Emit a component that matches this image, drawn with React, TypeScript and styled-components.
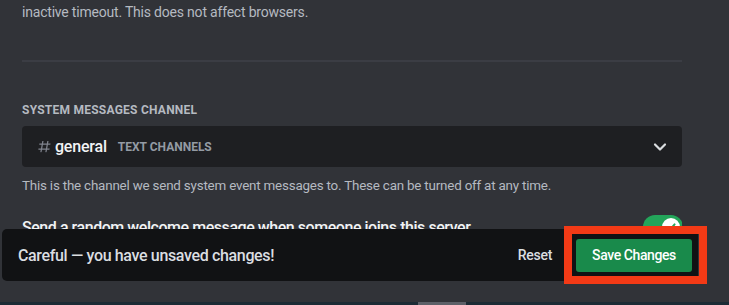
import React from "react";
import styled, { createGlobalStyle } from "styled-components";

const Global = createGlobalStyle`
  html, body { margin: 0; padding: 0; background: #313338; }
  body { font-family: Roboto, "Noto Sans", sans-serif; -webkit-font-smoothing: antialiased; }
`;

const Page = styled.div`
  position: relative;
  width: 729px;
  height: 305px;
  overflow: hidden;
  background: #313338;
  display: flex;
  flex-direction: column;
`;

const Content = styled.div`
  flex: 1;
  overflow: hidden;
  padding: 2px 0 0 22px;
  width: 660px;
  display: flex;
  flex-direction: column;
`;

const Description = styled.div<{ $mt?: number; $size?: number }>`
  margin-top: ${(p) => p.$mt ?? 0}px;
  font-size: ${(p) => p.$size ?? 14}px;
  line-height: 20px;
  letter-spacing: -0.2px;
  color: #b5bac1;
  white-space: nowrap;
`;

const Divider = styled.div`
  margin-top: 38px;
  height: 2px;
  background: #3b3d44;
`;

const Label = styled.div`
  margin-top: 40px;
  font-size: 12px;
  line-height: 16px;
  font-weight: 700;
  letter-spacing: 0.02em;
  text-transform: uppercase;
  color: #b5bac1;
`;

const Select = styled.div`
  margin-top: 8px;
  height: 41px;
  box-sizing: border-box;
  background: #1e1f22;
  border-radius: 4px;
  display: flex;
  align-items: center;
  padding: 0 15px;
`;

const ChannelName = styled.span`
  margin-left: 3px;
  font-size: 16px;
  font-weight: 500;
  letter-spacing: -0.2px;
  color: #f2f3f5;
`;

const Category = styled.span`
  margin-left: 11px;
  font-size: 12px;
  font-weight: 700;
  color: #949ba4;
  text-transform: uppercase;
`;

const Spacer = styled.div`
  flex: 1;
`;

const SwitchRow = styled.div`
  margin-top: 19px;
  display: flex;
  align-items: flex-start;
  justify-content: space-between;
`;

const SwitchLabel = styled.div`
  margin-top: 3px;
  font-size: 16px;
  line-height: 20px;
  font-weight: 500;
  letter-spacing: -0.45px;
  color: #f2f3f5;
`;

const Toggle = styled.div`
  width: 40px;
  height: 24px;
  border-radius: 12px;
  background: #23a55a;
  position: relative;
  margin-right: -1px;
`;

const Knob = styled.div`
  position: absolute;
  top: 3px;
  right: 3px;
  width: 18px;
  height: 18px;
  border-radius: 50%;
  background: #fff;
  display: flex;
  align-items: center;
  justify-content: center;
`;

const Notice = styled.div`
  position: absolute;
  left: 2px;
  top: 229px;
  width: 696px;
  height: 52px;
  box-sizing: border-box;
  background: #111214;
  border-radius: 5px;
  display: flex;
  align-items: center;
  padding: 0 6px 0 16px;
`;

const NoticeText = styled.div`
  flex: 1;
  font-size: 16px;
  font-weight: 500;
  letter-spacing: -0.35px;
  color: #dbdee1;
`;

const ResetButton = styled.button`
  background: none;
  border: none;
  padding: 0;
  margin-right: 24px;
  font-family: inherit;
  font-size: 14px;
  font-weight: 500;
  letter-spacing: -0.3px;
  color: #dbdee1;
`;

const SaveButton = styled.button`
  width: 116px;
  height: 33px;
  border: none;
  border-radius: 3px;
  background: #198a4b;
  color: #fff;
  font-family: inherit;
  font-size: 14px;
  font-weight: 500;
  letter-spacing: -0.4px;
  padding: 0;
`;

const Highlight = styled.div`
  position: absolute;
  left: 564px;
  top: 226px;
  width: 143px;
  height: 58px;
  box-sizing: border-box;
  border: 8px solid #f33a16;
  pointer-events: none;
`;

const BottomStrip = styled.div`
  height: 3px;
  background: #1c2b35;
  display: flex;
`;

const ScrollThumb = styled.div`
  margin-left: 418px;
  width: 48px;
  background: #5d6068;
`;

const HashIcon = () => (
  <svg width="15" height="15" viewBox="0 0 24 24" fill="#80848e">
    <path
      fillRule="evenodd"
      d="M5.88657 21C5.57547 21 5.3399 20.7189 5.39427 20.4126L6.00001 17H2.59511C2.28449 17 2.04905 16.7198 2.10259 16.4138L2.27759 15.4138C2.31946 15.1746 2.52722 15 2.77011 15H6.35001L7.41001 9H4.00511C3.69449 9 3.45905 8.71977 3.51259 8.41381L3.68759 7.41381C3.72946 7.17456 3.93722 7 4.18011 7H7.76001L8.39677 3.41262C8.43914 3.17391 8.64664 3 8.88907 3H9.87344C10.1845 3 10.4201 3.28107 10.3657 3.58738L9.76001 7H15.76L16.3968 3.41262C16.4391 3.17391 16.6466 3 16.8891 3H17.8734C18.1845 3 18.4201 3.28107 18.3657 3.58738L17.76 7H21.1649C21.4755 7 21.711 7.28023 21.6574 7.58619L21.4824 8.58619C21.4406 8.82544 21.2328 9 20.9899 9H17.41L16.35 15H19.7549C20.0655 15 20.301 15.2802 20.2474 15.5862L20.0724 16.5862C20.0306 16.8254 19.8228 17 19.5799 17H16L15.3632 20.5874C15.3209 20.8261 15.1134 21 14.8709 21H13.8866C13.5755 21 13.3399 20.7189 13.3943 20.4126L14 17H8.00001L7.36325 20.5874C7.32088 20.8261 7.11337 21 6.87094 21H5.88657ZM9.41045 9L8.35045 15H14.3504L15.4104 9H9.41045Z"
    />
  </svg>
);

const Chevron = () => (
  <svg width="14" height="10" viewBox="0 0 14 10">
    <polyline points="2,2.5 7,7.5 12,2.5" fill="none" stroke="#dbdee1" strokeWidth="2.2" strokeLinecap="round" strokeLinejoin="round" />
  </svg>
);

const Check = () => (
  <svg width="12" height="12" viewBox="0 0 12 12">
    <polyline points="2.5,6.2 5,8.6 9.6,3.4" fill="none" stroke="#23a55a" strokeWidth="2" strokeLinecap="round" strokeLinejoin="round" />
  </svg>
);

export default function App() {
  return (
    <Page>
      <Global />
      <Content>
        <Description>inactive timeout. This does not affect browsers.</Description>
        <Divider />
        <Label>System Messages Channel</Label>
        <Select>
          <HashIcon />
          <ChannelName>general</ChannelName>
          <Category>Text Channels</Category>
          <Spacer />
          <Chevron />
        </Select>
        <Description $mt={9} $size={13.4}>
          This is the channel we send system event messages to. These can be turned off at any time.
        </Description>
        <SwitchRow>
          <SwitchLabel>Send a random welcome message when someone joins this server.</SwitchLabel>
          <Toggle>
            <Knob>
              <Check />
            </Knob>
          </Toggle>
        </SwitchRow>
      </Content>
      <BottomStrip>
        <ScrollThumb />
      </BottomStrip>
      <Notice>
        <NoticeText>Careful — you have unsaved changes!</NoticeText>
        <ResetButton>Reset</ResetButton>
        <SaveButton>Save Changes</SaveButton>
      </Notice>
      <Highlight />
    </Page>
  );
}
